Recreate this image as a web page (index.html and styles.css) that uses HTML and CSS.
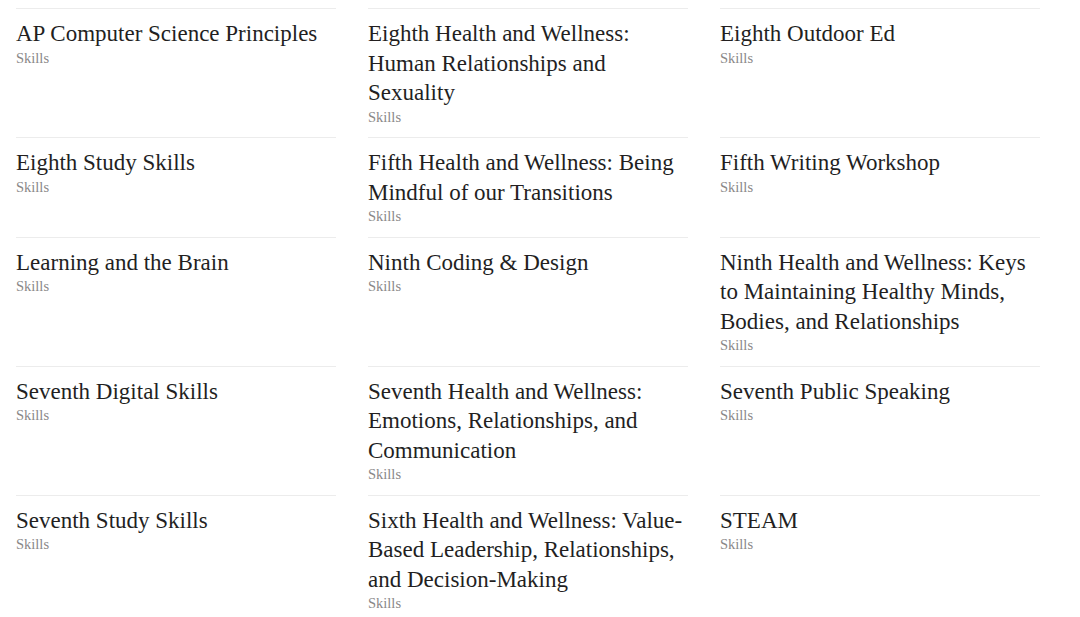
FILE: index.html
```html
<!DOCTYPE html>
<html>
<head>
<meta charset="utf-8">
<link rel="stylesheet" href="styles.css">
</head>
<body>
<div class="grid">
  <div class="cell"><div class="title">AP Computer Science Principles</div><div class="sub">Skills</div></div>
  <div class="cell"><div class="title">Eighth Health and Wellness: Human Relationships and Sexuality</div><div class="sub">Skills</div></div>
  <div class="cell"><div class="title">Eighth Outdoor Ed</div><div class="sub">Skills</div></div>
  <div class="cell"><div class="title">Eighth Study Skills</div><div class="sub">Skills</div></div>
  <div class="cell"><div class="title">Fifth Health and Wellness: Being Mindful of our Transitions</div><div class="sub">Skills</div></div>
  <div class="cell"><div class="title">Fifth Writing Workshop</div><div class="sub">Skills</div></div>
  <div class="cell"><div class="title">Learning and the Brain</div><div class="sub">Skills</div></div>
  <div class="cell"><div class="title">Ninth Coding &amp; Design</div><div class="sub">Skills</div></div>
  <div class="cell"><div class="title">Ninth Health and Wellness: Keys to Maintaining Healthy Minds, Bodies, and Relationships</div><div class="sub">Skills</div></div>
  <div class="cell"><div class="title">Seventh Digital Skills</div><div class="sub">Skills</div></div>
  <div class="cell"><div class="title">Seventh Health and Wellness: Emotions, Relationships, and Communication</div><div class="sub">Skills</div></div>
  <div class="cell"><div class="title">Seventh Public Speaking</div><div class="sub">Skills</div></div>
  <div class="cell"><div class="title">Seventh Study Skills</div><div class="sub">Skills</div></div>
  <div class="cell"><div class="title">Sixth Health and Wellness: Value-Based Leadership, Relationships, and Decision-Making</div><div class="sub">Skills</div></div>
  <div class="cell"><div class="title">STEAM</div><div class="sub">Skills</div></div>
</div>
</body>
</html>
```
FILE: styles.css
```css
html, body {
  margin: 0;
  padding: 0;
  background: #fff;
}
body {
  padding: 8px 0 0 16px;
  font-family: "Liberation Serif", "Times New Roman", serif;
}
.grid {
  display: grid;
  grid-template-columns: repeat(3, 320px);
  column-gap: 32px;
}
.cell {
  border-top: 1px solid #ececec;
  padding: 10px 0 10.5px;
}
.title {
  font-size: 23px;
  line-height: 29.5px;
  color: #231f1f;
}
.sub {
  font-size: 14.5px;
  line-height: 19px;
  color: #8a8888;
}
```
